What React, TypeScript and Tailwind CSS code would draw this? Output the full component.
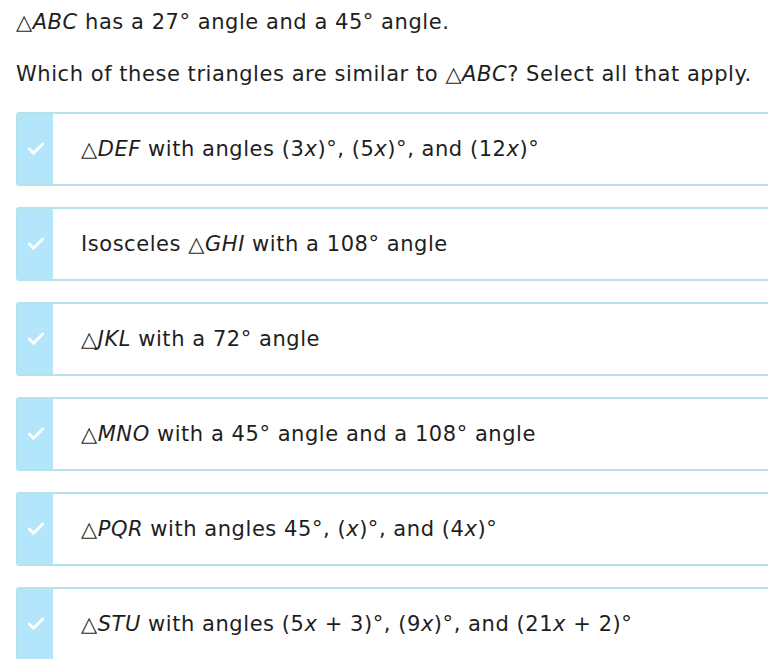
import { Check } from 'lucide-react';
import type { ReactNode } from 'react';

const options: ReactNode[] = [
  <>△<i>DEF</i> with angles (3<i>x</i>)°, (5<i>x</i>)°, and (12<i>x</i>)°</>,
  <>Isosceles △<i>GHI</i> with a 108° angle</>,
  <>△<i>JKL</i> with a 72° angle</>,
  <>△<i>MNO</i> with a 45° angle and a 108° angle</>,
  <>△<i>PQR</i> with angles 45°, (<i>x</i>)°, and (4<i>x</i>)°</>,
  <>△<i>STU</i> with angles (5<i>x</i> + 3)°, (9<i>x</i>)°, and (21<i>x</i> + 2)°</>,
];

export default function App() {
  return (
    <div className="h-[659px] overflow-hidden bg-white pl-4 font-['DejaVu_Sans',sans-serif] text-[21px] tracking-[0.55px] text-[#1e1e1e]">
      <p className="pt-[9px] leading-[26px]">
        △<i>ABC</i> has a 27° angle and a 45° angle.
      </p>
      <p className="mt-[26px] leading-[26px]">
        Which of these triangles are similar to △<i>ABC</i>? Select all that apply.
      </p>
      <div className="mt-[25px] flex flex-col gap-[21px]">
        {options.map((opt, i) => (
          <div
            key={i}
            className="flex h-[74px] w-[780px] overflow-hidden rounded-[3px] border-2 border-[#b6e3ea] bg-white"
          >
            <div className="flex w-[35px] shrink-0 items-center justify-center bg-[#b3e5fb]">
              <Check className="h-5 w-5 text-white" strokeWidth={3.5} />
            </div>
            <div className="flex items-center pl-[28px] pt-[2px]">
              <span>{opt}</span>
            </div>
          </div>
        ))}
      </div>
    </div>
  );
}
